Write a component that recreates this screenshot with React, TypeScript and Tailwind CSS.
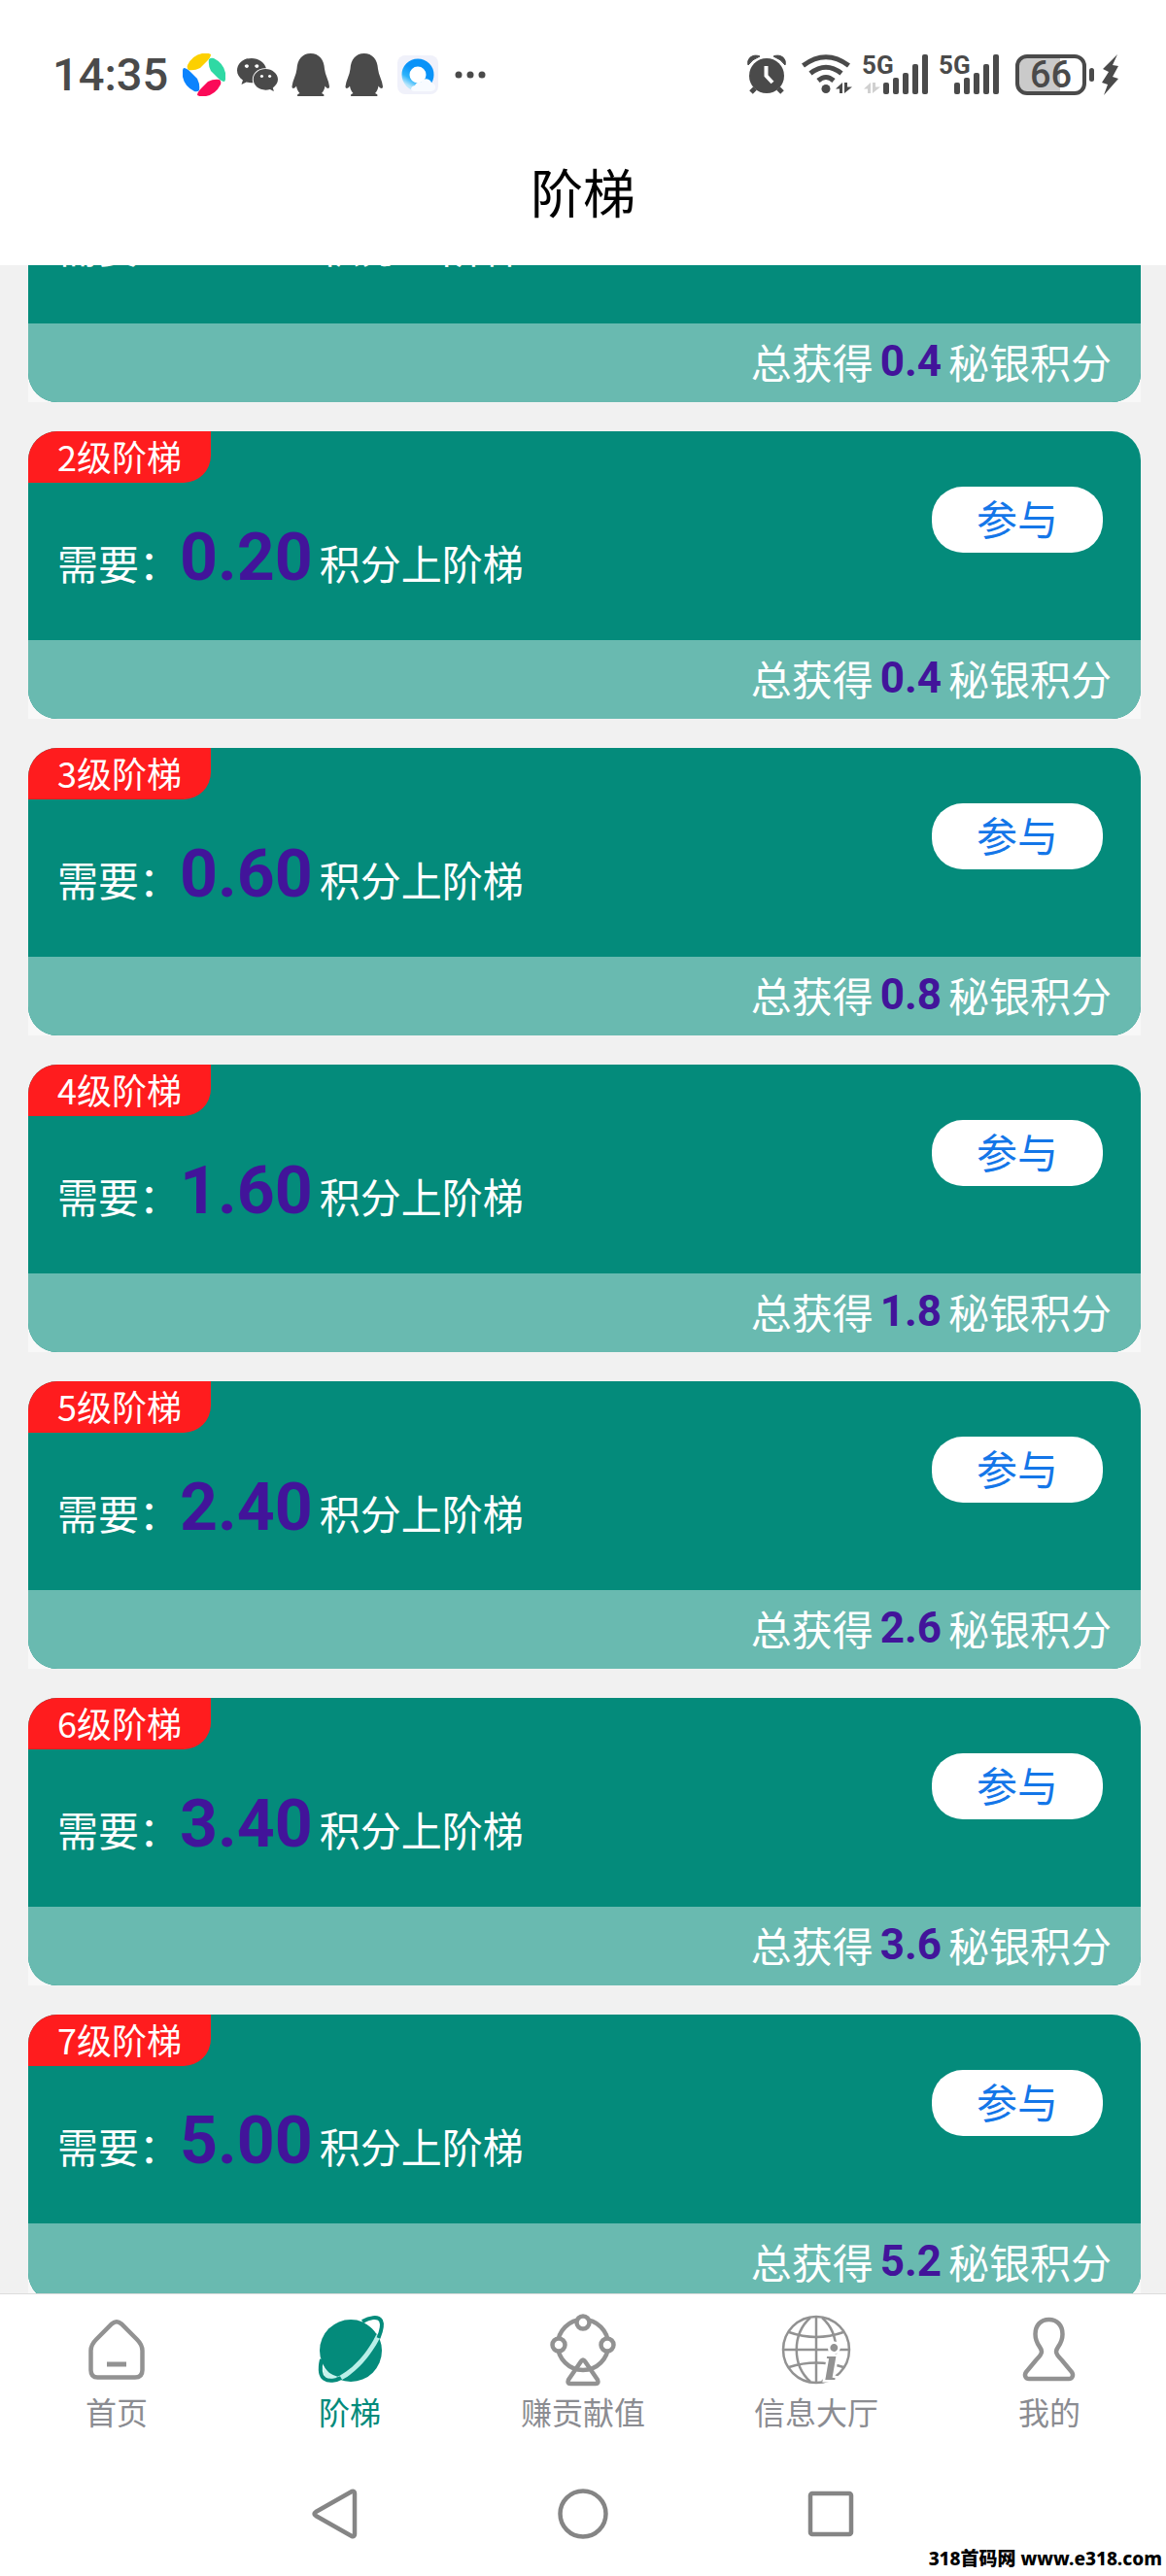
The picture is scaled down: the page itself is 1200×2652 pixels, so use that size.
import type { ReactNode } from 'react';
import { FaWeixin } from 'react-icons/fa';

const levels = [
  { level: 1, need: '0.20', reward: '0.4' },
  { level: 2, need: '0.20', reward: '0.4' },
  { level: 3, need: '0.60', reward: '0.8' },
  { level: 4, need: '1.60', reward: '1.8' },
  { level: 5, need: '2.40', reward: '2.6' },
  { level: 6, need: '3.40', reward: '3.6' },
  { level: 7, need: '5.00', reward: '5.2' },
];

const SwirlIcon = () => {
  const petal = 'M5 12 Q10 2 20 0 Q26 -1 29 1 Q29 4 25 8 L18 15 Q12 18 6 17 Q4 15 5 12Z';
  return (
    <svg viewBox="0 0 44 44" className="h-11 w-11">
      <path d={petal} fill="#fcd000" />
      <path d={petal} fill="#2fd9a4" transform="rotate(90 22 22)" />
      <path d={petal} fill="#fb0a58" transform="rotate(180 22 22)" />
      <path d={petal} fill="#0b83fd" transform="rotate(270 22 22)" />
    </svg>
  );
};

const PenguinIcon = () => (
  <svg viewBox="-2 0 44 44" className="h-11 w-11" fill="currentColor">
    <path d="M19.700 0C28 0 33.500 6 34 16C34.500 22 38.500 28 39 34C39 36.500 37 37 34.500 33.500C34 37 32.500 39.500 31 41C34 42 34.500 44 32 44H7.500C5 44 5.500 42 8.500 41C7 39.500 5.500 37 5 33.500C2.500 37 .5 36.500 .5 34C1 28 5 22 5.500 16C6 6 11.500 0 19.700 0Z" />
  </svg>
);

const BrowserIcon = () => (
  <svg viewBox="0 0 44 44" className="h-11 w-11">
    <defs>
      <linearGradient id="browser-ring" x1="0.8" y1="0" x2="0.2" y2="1">
        <stop offset="0.4" stopColor="#0a93f8" />
        <stop offset="0.75" stopColor="#2cb4fb" />
        <stop offset="1" stopColor="#b9e6fb" />
      </linearGradient>
    </defs>
    <rect x="1" y="2" width="42" height="40" rx="8" fill="#f0f1fa" />
    <circle cx="22" cy="22" r="12.500" fill="#fff" stroke="url(#browser-ring)" strokeWidth="8" />
    <path d="M18 39C14 39 14 34 19 33C20 30 23 29 25 30C27 25 34 25 36 30C41 31 42 38 36 39Z" fill="#f8fbff" />
  </svg>
);

const AlarmIcon = () => (
  <svg viewBox="0 0 40 42" className="mr-1 h-[42px] w-10" fill="none" stroke="currentColor">
    <circle cx="20" cy="22" r="18" fill="currentColor" stroke="none" />
    <path d="M1 11C-1 4 6 -1 13 2Q5 5 1 11ZM39 11C41 4 34 -1 27 2Q35 5 39 11Z" fill="currentColor" stroke="currentColor" />
    <path d="M8 35L4 39M32 35L36 39" strokeWidth="5" />
    <path d="M19.500 12V22L26 29" stroke="#fff" strokeWidth="4" />
  </svg>
);

const WifiIcon = () => (
  <svg viewBox="0 0 52 42" className="h-[42px] w-[52px]" fill="none" stroke="currentColor" strokeWidth="5">
    <path d="M1.500 11.500Q25 -6 48.500 11.500" />
    <path d="M9 19.500Q25 7 41 19.500" />
    <path d="M17 27Q25 20 33 27" />
    <circle cx="25" cy="35.500" r="4.500" fill="currentColor" stroke="none" />
    <path d="M35 35.500L42 29V40H39V35.500ZM44 29H47V33.500H52L44 40Z" fill="currentColor" stroke="none" />
  </svg>
);

const SignalIcon = ({ idle = false }: { idle?: boolean }) => {
  const start = idle ? 20 : 14;
  const tops = [29, 24, 19, 10, 0];
  return (
    <svg
      viewBox={idle ? '0 0 67 42' : '0 0 61 42'}
      className={idle ? 'h-[42px] w-[67px] overflow-visible' : 'h-[42px] w-[61px] overflow-visible'}
      fill="currentColor"
    >
      <text x="-2" y="20" className="font-['Roboto'] text-[26px] font-bold">5G</text>
      {idle && <path d="M0 35.500L7 29V40H4V35.500ZM9 29H12V33.500H17L9 40Z" fill="#d0d0d0" />}
      {tops.map((top, i) => (
        <rect key={top} x={start + i * 10} y={top} width="6" height={41 - top} rx="2" />
      ))}
    </svg>
  );
};

const BoltIcon = () => (
  <svg viewBox="0 0 18 42" className="h-[42px] w-[18px]" fill="currentColor">
    <path d="M16 0L1 15L7 18L0 29L6 31L2 42L17 25L11 23L17 12L11 11Z" />
  </svg>
);

const StatusBar = () => (
  <div className="flex h-[125px] shrink-0 items-center justify-between pr-12 pl-[54px] pt-[29px] text-[#4a4a4a]">
    <div className="flex items-center gap-[11px]">
      <span className="w-[123px] font-['Roboto'] text-[47px] leading-[60px] font-medium">14:35</span>
      <SwirlIcon />
      <FaWeixin className="h-11 w-11" />
      <PenguinIcon />
      <PenguinIcon />
      <BrowserIcon />
      <svg viewBox="0 0 44 8" className="h-2 w-11" fill="currentColor">
        <circle cx="9" cy="4" r="3.500" />
        <circle cx="21" cy="4" r="3.500" />
        <circle cx="33" cy="4" r="3.500" />
      </svg>
    </div>
    <div className="flex items-center gap-3">
      <AlarmIcon />
      <WifiIcon />
      <SignalIcon idle />
      <SignalIcon />
      <div className="ml-1 flex items-center gap-[3px]">
        <span className="flex h-[42px] w-[73px] items-center justify-center rounded-[12px] border-4 border-current bg-linear-to-r from-[#cacaca] from-65% to-white to-65% font-['Roboto'] text-[38px] leading-none font-medium">
          66
        </span>
        <span className="h-[14px] w-[5px] rounded-full bg-current" />
      </div>
      <span className="-ml-1">
        <BoltIcon />
      </span>
    </div>
  </div>
);

const LevelCard = ({ level, need, reward }: { level: number; need: string; reward: string }) => (
  <li className="rounded-t-[30px] bg-[#f8f8f8]">
    <article className="overflow-hidden rounded-[30px] bg-[#048b7b] text-white">
      <div className="h-[215px]">
        <h2 className="flex h-[53px] w-fit items-center rounded-br-[28px] bg-[#ff1c1e] px-[30px] pb-1 text-[36px] leading-[48px]">
          {level}级阶梯
        </h2>
        <div className="flex items-start justify-between pr-[39px] pl-[30px]">
          <p className="pt-[37px] text-[42px] leading-[80px]">
            需要：
            <strong className="mr-[7px] font-['Roboto'] text-[68px] font-bold text-[#42149a]">{need}</strong>
            积分上阶梯
          </p>
          <button className="mt-1 h-[68px] w-44 rounded-[32px] bg-white pb-1 text-[42px] leading-[60px] text-[#1476e8]">
            参与
          </button>
        </div>
      </div>
      <p className="flex h-[81px] items-center justify-end bg-[#69bab0] px-[30px] pb-1 text-[42px] leading-[60px]">
        总获得
        <strong className="mx-[7px] font-['Roboto'] text-[44px] font-bold text-[#42149a]">{reward}</strong>
        秘银积分
      </p>
    </article>
  </li>
);

const HomeIcon = () => (
  <svg viewBox="0 0 80 80" className="h-20 w-20" fill="none" stroke="#929292" strokeWidth="4.500">
    <path d="M35 13.500Q40 9 45 13.500L61 29.500Q66.500 35 66.500 41V61Q66.500 68.500 59 68.500H20.500Q13.500 68.500 13.500 61V41Q13.500 35 19 29.500Z" />
    <path d="M30 55H50" strokeWidth="5" />
  </svg>
);

const PlanetIcon = () => (
  <svg viewBox="0 0 80 80" className="h-20 w-20" fill="none">
    <circle cx="41" cy="41" r="32" fill="#048b7b" />
    <path d="M56 13C61 10 68 9 70 12C71 15 69 20 67.500 24Q63 17 56 13Z" fill="#fff" />
    <path d="M12.500 58C12 64 14 69 18 69.500C21 70 25 69.500 28 68Q18 65 12.500 58Z" fill="#c6f3ed" />
    <path d="M67.500 24L71 28C62 46 46 64 32 71L27 68C44 60 59 42 67.500 24Z" fill="#b9efe8" />
    <path d="M53 11C60 7 69 5 72 10C74 14 72 22 69.500 28" stroke="#048b7b" strokeWidth="4" />
    <path d="M11 50C9 59 9 67 14 70C18 73 26 72 31 69" stroke="#048b7b" strokeWidth="4" />
  </svg>
);

const WheelIcon = () => (
  <svg viewBox="0 0 80 80" className="h-20 w-20" fill="none" stroke="#929292" strokeWidth="4.500" strokeLinejoin="round">
    <circle cx="40" cy="35" r="26" />
    <circle cx="40" cy="12" r="6.500" fill="#fff" />
    <circle cx="15" cy="35" r="6.500" fill="#fff" />
    <circle cx="65" cy="35" r="6.500" fill="#fff" />
    <path d="M38 52Q40 49 42 52L55 71Q56.500 75 53 75H27Q23.500 75 25 71Z" />
  </svg>
);

const GlobeIcon = () => (
  <svg viewBox="0 0 80 80" className="h-20 w-20" fill="none" stroke="#929292" strokeWidth="2.500">
    <circle cx="40" cy="40" r="34" />
    <path d="M40 6V74M6 40H74" />
    <path d="M12 22Q40 32 68 22M12 58Q40 49 68 58" />
    <path d="M34 7C15 24 15 56 34 73M46 7C65 24 65 56 46 73" />
    <text
      x="48"
      y="71"
      className="font-['Liberation_Serif'] text-[52px] font-bold italic"
      fill="#929292"
      stroke="#fff"
      strokeWidth="5"
      paintOrder="stroke"
    >
      i
    </text>
  </svg>
);

const UserIcon = () => (
  <svg viewBox="0 0 80 80" className="h-20 w-20" fill="none" stroke="#929292" strokeWidth="4.500">
    <path d="M39.500 9C31 9 25.500 15 25.500 24C25.500 35 32 37 32 42C32 45 29 48 26 51L16 63C13.500 67 16 70 19 70H60C63 70 65.500 67 63 63L53 51C50 48 47 45 47 42C47 37 53.500 35 53.500 24C53.500 15 48 9 39.500 9Z" />
  </svg>
);

const tabs: { label: string; icon: ReactNode; active?: boolean }[] = [
  { label: '首页', icon: <HomeIcon /> },
  { label: '阶梯', icon: <PlanetIcon />, active: true },
  { label: '赚贡献值', icon: <WheelIcon /> },
  { label: '信息大厅', icon: <GlobeIcon /> },
  { label: '我的', icon: <UserIcon /> },
];

const TabBar = () => (
  <nav className="grid shrink-0 grid-cols-5 border-t border-[#dcdcdc] bg-white pt-[17px]">
    {tabs.map((tab) => (
      <a
        key={tab.label}
        href="#"
        className={`flex flex-col items-center gap-0.5 text-[32px] leading-[42px] ${
          tab.active ? 'text-[#048b7b]' : 'text-[#8b8c91]'
        }`}
      >
        {tab.icon}
        {tab.label}
      </a>
    ))}
  </nav>
);

const SystemNav = () => (
  <div className="relative flex h-[149px] shrink-0 items-center justify-center gap-[199px] bg-white pt-[21px]">
    <button aria-label="返回">
      <svg viewBox="0 0 56 56" className="h-14 w-14" fill="none" stroke="#858585" strokeWidth="4.500" strokeLinejoin="round">
        <path d="M45 5Q48 4 48 7V49Q48 52 45 51L8 30Q5 28 8 26Z" />
      </svg>
    </button>
    <button aria-label="主屏幕">
      <svg viewBox="0 0 56 56" className="h-14 w-14" fill="none" stroke="#858585" strokeWidth="4.500">
        <circle cx="28" cy="28" r="23.500" />
      </svg>
    </button>
    <button aria-label="最近任务">
      <svg viewBox="0 0 56 56" className="h-14 w-14" fill="none" stroke="#858585" strokeWidth="4.500">
        <rect x="7" y="7" width="42" height="42" rx="2" />
      </svg>
    </button>
    <span className="absolute right-1 bottom-1.5 font-['Noto_Sans','Noto_Sans_CJK_SC',sans-serif] text-[19px] leading-6 font-extrabold text-black">
      318首码网 www.e318.com
    </span>
  </div>
);

export default function App() {
  return (
    <div className="flex h-screen flex-col bg-white font-['Noto_Sans_CJK_SC',sans-serif]">
      <StatusBar />
      <header className="flex h-[148px] shrink-0 items-center justify-center pb-1">
        <h1 className="text-[54px] leading-[80px] text-black">阶梯</h1>
      </header>
      <main className="min-h-0 flex-1 overflow-hidden bg-[#f1f1f1] pr-[26px] pl-[29px]">
        {/* list is scrolled part of the way into the first card */}
        <ul className="-mt-[155px] flex flex-col gap-[30px]">
          {levels.map((item) => (
            <LevelCard key={item.level} {...item} />
          ))}
        </ul>
      </main>
      <TabBar />
      <SystemNav />
    </div>
  );
}
